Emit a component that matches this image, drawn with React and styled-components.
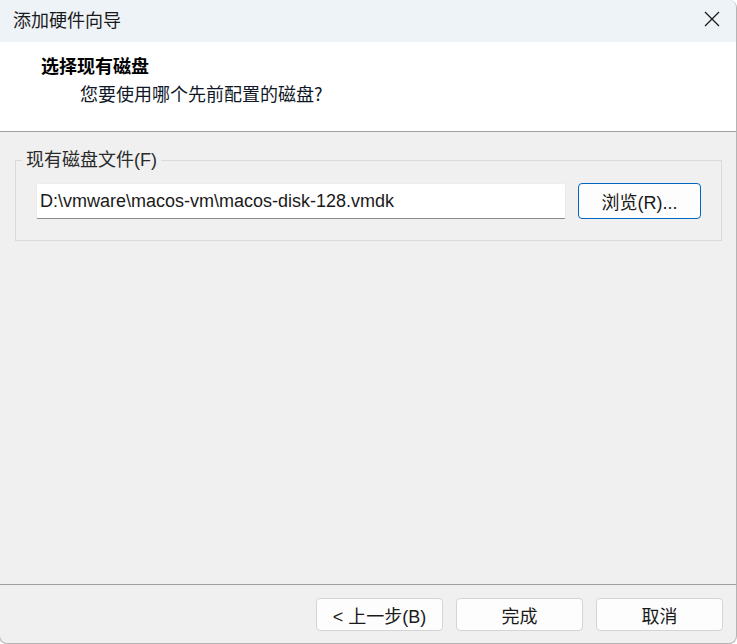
import React from 'react';
import styled, {createGlobalStyle} from 'styled-components';

const GlobalStyle = createGlobalStyle`
  html, body {
    margin: 0;
    padding: 0;
    background: #ffffff;
    overflow: hidden;
  }
  body {
    font-family: "Liberation Sans", "Noto Sans CJK SC", sans-serif;
    font-size: 18px;
    color: #1a1a1a;
  }
`;

export default function App() {
  return (
    <>
      <GlobalStyle />
      <Window>
        <TitleBar>
          <Title>添加硬件向导</Title>
          <CloseButton aria-label="关闭">
            <svg width="16" height="16" viewBox="0 0 16 16">
              <path d="M1 1 L15 15 M15 1 L1 15" stroke="#1c1c1c" strokeWidth="1.3" fill="none" />
            </svg>
          </CloseButton>
        </TitleBar>

        <Header>
          <Heading>选择现有磁盘</Heading>
          <SubHeading>您要使用哪个先前配置的磁盘?</SubHeading>
        </Header>

        <Body>
          <GroupBox>
            <Legend>现有磁盘文件(F)</Legend>
            <FileRow>
              <PathInput defaultValue="D:\vmware\macos-vm\macos-disk-128.vmdk" />
              <Button $primary $width={123} $height={36}>浏览(R)...</Button>
            </FileRow>
          </GroupBox>
        </Body>

        <Footer>
          <Button>&lt; 上一步(B)</Button>
          <Button>完成</Button>
          <Button>取消</Button>
        </Footer>
      </Window>
    </>
  );
}

const Window = styled.div`
  box-sizing: border-box;
  width: 738px;
  height: 644px;
  margin-left: -1px;
  display: flex;
  flex-direction: column;
  background: #f0f0f0;
  border: 1px solid #b4b4b4;
  border-top: none;
  border-radius: 0 8px 8px 8px;
  overflow: hidden;
`;

const TitleBar = styled.div`
  height: 42px;
  flex: none;
  display: flex;
  align-items: flex-start;
  justify-content: space-between;
  background: #eef3f8;
  padding-left: 13px;
`;

const Title = styled.div`
  font-family: "Noto Sans CJK SC", sans-serif;
  font-size: 18px;
  line-height: 22px;
  padding-top: 8px;
  color: #1a1a1a;
`;

const CloseButton = styled.div`
  width: 48px;
  height: 38px;
  display: flex;
  align-items: center;
  justify-content: center;
`;

const Header = styled.div`
  box-sizing: border-box;
  height: 90px;
  flex: none;
  background: #ffffff;
  border-bottom: 1px solid #a0a0a0;
  padding: 12px 0 0 41px;
`;

const Heading = styled.div`
  font-family: "Noto Sans CJK SC", sans-serif;
  font-weight: 700;
  font-size: 18px;
  line-height: 22px;
  color: #000000;
`;

const SubHeading = styled.div`
  font-family: "Noto Sans CJK SC", sans-serif;
  font-size: 18px;
  line-height: 22px;
  margin-top: 6px;
  padding-left: 39px;
  color: #101828;
`;

const Body = styled.div`
  flex: 1;
  padding: 17px 14px 0 15px;
`;

const GroupBox = styled.fieldset`
  margin: 0;
  padding: 12px 20px 21px 20px;
  border: 1px solid #dadada;
  min-width: 0;
`;

const Legend = styled.legend`
  font-family: "Liberation Sans", "Noto Sans CJK SC", sans-serif;
  font-size: 18px;
  line-height: 22px;
  padding: 0 4px;
  margin-left: -14px;
  color: #2a2a2a;
`;

const FileRow = styled.div`
  display: flex;
  gap: 12px;
  align-items: stretch;
`;

const PathInput = styled.input`
  box-sizing: border-box;
  width: 530px;
  height: 36px;
  padding: 0 3px;
  font-family: "Liberation Sans", sans-serif;
  font-size: 18px;
  color: #1a1a1a;
  background: #ffffff;
  border: 1px solid #ececec;
  border-bottom: 1px solid #8a8a8a;
  border-radius: 2px;
  outline: none;
`;

const Button = styled.div`
  box-sizing: border-box;
  width: ${p => p.$width || 127}px;
  height: ${p => p.$height || 33}px;
  display: flex;
  align-items: center;
  justify-content: center;
  font-family: "Liberation Sans", "Noto Sans CJK SC", sans-serif;
  font-size: 18px;
  color: #1a1a1a;
  background: #fdfdfd;
  border: 1px solid ${p => (p.$primary ? '#0067c0' : '#d4d4d4')};
  border-radius: 4px;
`;

const Footer = styled.div`
  flex: none;
  display: flex;
  justify-content: flex-end;
  gap: 13px;
  border-top: 1px solid #a0a0a0;
  padding: 13px 13px 12px 0;
`;
